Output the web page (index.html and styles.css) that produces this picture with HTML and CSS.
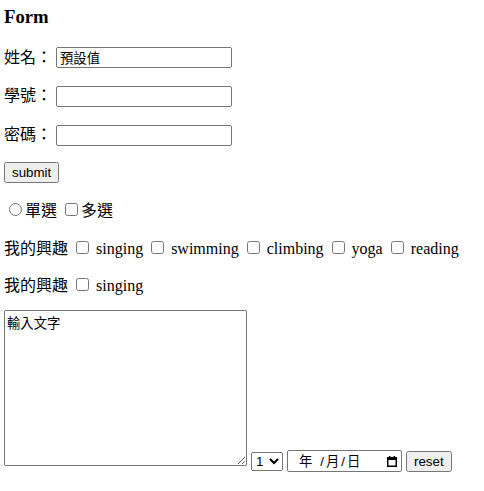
FILE: index.html
```html
<!DOCTYPE html>
<html>
<head>
<meta charset="utf-8">
<link rel="stylesheet" href="styles.css">
</head>
<body>
<form class="form">
<h3 class="title">Form</h3>
<p class="row row-first">姓名： <input class="text" type="text" value="預設值"></p>
<p class="row row-field">學號： <input class="text" type="text"></p>
<p class="row row-field">密碼： <input class="text" type="password"></p>
<p class="row"><input class="btn" type="submit" value="submit"></p>
<p class="row row-choice"><input type="radio">單選 <input type="checkbox">多選</p>
<p class="row row-field">我的興趣 <input type="checkbox"> singing <input type="checkbox"> swimming <input type="checkbox"> climbing <input type="checkbox"> yoga <input type="checkbox"> reading</p>
<p class="row row-choice">我的興趣 <input type="checkbox"> singing</p>
<p class="row row-last"><textarea class="area">輸入文字</textarea> <select class="sel"><option>1</option><option>2</option></select> <span class="date"><span class="date-y">年</span><span class="date-md">/月/日</span><svg class="cal" width="10" height="11" viewBox="0 0 10 11"><rect x="0.75" y="1.75" width="8.5" height="8.5" fill="none" stroke="#000" stroke-width="1.5"/><rect x="0" y="1" width="10" height="3" fill="#000"/><rect x="2" y="0" width="1.5" height="2" fill="#000"/><rect x="6.5" y="0" width="1.5" height="2" fill="#000"/></svg></span> <input class="btn" type="reset" value="reset"></p>
</form>
</body>
</html>
```
FILE: styles.css
```css
body {
  margin: 0 4px;
  font-family: "Liberation Serif", "Noto Sans CJK TC", serif;
  font-size: 16px;
  line-height: 1.15;
  color: #000;
  background: #fff;
}
.title {
  margin: 6px 0 0;
  font-size: 18.72px;
}
.row {
  margin: 16px 0 0;
}
.row-first {
  margin-top: 19px;
}
.row-field {
  margin-top: 18px;
}
.row-choice {
  margin-top: 17px;
}
.row-last {
  margin-top: 14px;
}
.text, .area, .sel, .date, .btn {
  font-family: "Liberation Sans", "Noto Sans CJK TC", sans-serif;
  font-size: 13.33px;
}
.text {
  width: 168px;
}
.area {
  box-sizing: border-box;
  width: 243px;
  height: 156px;
}
.sel {
  width: 32px;
}
.date {
  display: inline-flex;
  align-items: center;
  box-sizing: border-box;
  width: 115px;
  height: 22px;
  padding: 0 4px 0 11px;
  border: 1px solid #767676;
  border-radius: 2px;
  background: #fff;
  color: #000;
}
.date-y {
  margin-right: 8px;
}
.date-md {
  letter-spacing: 2px;
}
.cal {
  margin-left: auto;
}
```
